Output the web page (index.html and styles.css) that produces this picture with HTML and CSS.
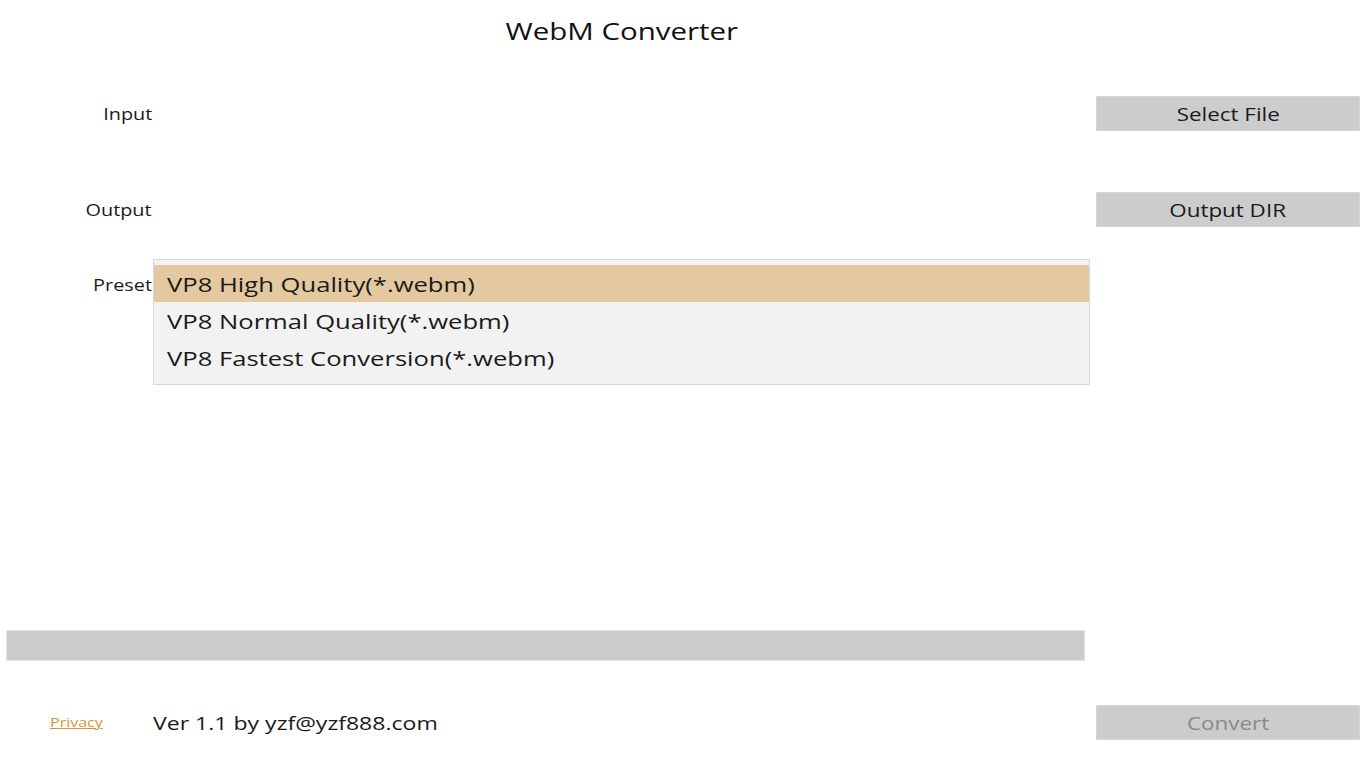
FILE: index.html
```html
<!DOCTYPE html>
<html>
<head>
<meta charset="utf-8">
<link rel="stylesheet" href="styles.css">
</head>
<body>
<div class="app">
  <header class="title-bar"><h1 class="title"><span class="wide wide-c">WebM Converter</span></h1></header>

  <div class="row row-input">
    <div class="label"><span class="wide wide-r">Input</span></div>
    <div class="field"></div>
    <button class="btn"><span class="wide wide-c">Select File</span></button>
  </div>

  <div class="row row-output">
    <div class="label"><span class="wide wide-r">Output</span></div>
    <div class="field"></div>
    <button class="btn"><span class="wide wide-c">Output DIR</span></button>
  </div>

  <div class="row row-preset">
    <div class="label label-top"><span class="wide wide-r">Preset</span></div>
    <ul class="dropdown">
      <li class="item selected"><span class="wide wide-l">VP8 High Quality(*.webm)</span></li>
      <li class="item"><span class="wide wide-l">VP8 Normal Quality(*.webm)</span></li>
      <li class="item"><span class="wide wide-l">VP8 Fastest Conversion(*.webm)</span></li>
    </ul>
  </div>

  <div class="progress-row">
    <div class="progress"></div>
  </div>

  <div class="row row-footer">
    <div class="privacy-cell"><a class="privacy" href="#"><span class="wide wide-l privacy-text">Privacy</span></a></div>
    <div class="version"><span class="wide wide-l">Ver 1.1 by yzf@yzf888.com</span></div>
    <button class="btn btn-disabled"><span class="wide wide-c">Convert</span></button>
  </div>
</div>
</body>
</html>
```

FILE: styles.css
```css
* { box-sizing: border-box; }
html, body { margin: 0; padding: 0; background: #fff; }
body {
  font-family: "Open Sans", "Noto Sans", sans-serif;
  color: #1a1a1a;
  width: 1366px;
  height: 768px;
  overflow: hidden;
}
.app { display: flex; flex-direction: column; }

/* the reference text is horizontally stretched */
.wide { display: inline-block; transform: scaleX(1.28); white-space: nowrap; }
.wide-l { transform-origin: left center; }
.wide-r { transform-origin: right center; }
.wide-c { transform-origin: center center; }

.title-bar {
  width: 1244px;
  height: 62px;
  display: flex;
  justify-content: center;
  align-items: center;
}
.title {
  margin: 0;
  font-weight: 400;
  font-size: 23px;
  color: #111;
}

.row {
  display: grid;
  grid-template-columns: 153px 937px 6px 264px;
  align-items: center;
}
.row > .btn { grid-column: 4; }
.row-input { margin-top: 34px; height: 35px; }
.row-output { margin-top: 61px; height: 35px; }
.row-preset { margin-top: 32px; align-items: start; }
.row-footer { margin-top: 44px; height: 35px; }

.label {
  text-align: right;
  font-size: 15.5px;
  padding-right: 1px;
  color: #1a1a1a;
}
.label-top { padding-top: 15px; }

.btn {
  height: 35px;
  background: #cccccc;
  border: 1px solid #d6d6d6;
  font-family: inherit;
  font-size: 17.5px;
  color: #1a1a1a;
  padding: 0;
  margin: 0;
}
.btn-disabled { color: #8a8a8a; }

.dropdown {
  list-style: none;
  margin: 0;
  padding: 5px 0 7px;
  background: #f2f2f2;
  border: 1px solid #d9d9d9;
  height: 126px;
}
.item {
  height: 37px;
  line-height: 35px;
  padding-top: 2px;
  padding-left: 13px;
  font-size: 20px;
  color: #1a1a1a;
}
.item.selected { background: #e3c8a0; }

.progress-row { margin-top: 245px; padding-left: 6px; }
.progress {
  width: 1079px;
  height: 31px;
  background: #cccccc;
  border: 1px solid #e4e4e4;
}

.privacy-cell { padding-left: 50px; margin-top: -3px; }
.privacy {
  font-size: 12.5px;
  color: #d9933a;
  text-decoration: underline;
}
.privacy-text { text-decoration: underline; }
.version {
  font-size: 18px;
  color: #1a1a1a;
}
```
